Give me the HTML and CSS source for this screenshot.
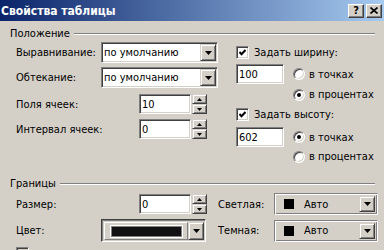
FILE: index.html
```html
<!DOCTYPE html>
<html lang="ru">
<head>
<meta charset="utf-8">
<title>Свойства таблицы</title>
<link rel="stylesheet" href="styles.css">
</head>
<body>
<div class="win">
  <div class="title">
    <span class="title-text">Свойства таблицы</span>
    <div class="tbtns">
      <span class="tbtn q">?</span>
      <span class="tbtn"><svg width="8" height="7" viewBox="0 0 8 7"><path d="M0.5 0.5 L7.5 6.5 M7.5 0.5 L0.5 6.5" stroke="#000" stroke-width="1.6"/></svg></span>
    </div>
  </div>
  <div class="body">
    <div class="legend"><span>Положение</span><i class="rule"></i></div>
    <div class="pos">
      <div class="pos-left">
        <div class="row r1">
          <span class="lbl">Выравнивание:</span>
          <div class="combo"><span class="val">по умолчанию</span><span class="dd"><svg width="7" height="4" viewBox="0 0 7 4"><polygon points="0,0 7,0 3.5,4" fill="#000"/></svg></span></div>
        </div>
        <div class="row r2">
          <span class="lbl">Обтекание:</span>
          <div class="combo"><span class="val">по умолчанию</span><span class="dd"><svg width="7" height="4" viewBox="0 0 7 4"><polygon points="0,0 7,0 3.5,4" fill="#000"/></svg></span></div>
        </div>
        <div class="row r3">
          <span class="lbl wide">Поля ячеек:</span>
          <div class="field">10</div>
          <div class="spin">
            <span class="sb"><svg width="5" height="3" viewBox="0 0 5 3"><polygon points="2.5,0 5,3 0,3" fill="#000"/></svg></span>
            <span class="sb"><svg width="5" height="3" viewBox="0 0 5 3"><polygon points="0,0 5,0 2.5,3" fill="#000"/></svg></span>
          </div>
        </div>
        <div class="row r4">
          <span class="lbl wide">Интервал ячеек:</span>
          <div class="field">0</div>
          <div class="spin">
            <span class="sb"><svg width="5" height="3" viewBox="0 0 5 3"><polygon points="2.5,0 5,3 0,3" fill="#000"/></svg></span>
            <span class="sb"><svg width="5" height="3" viewBox="0 0 5 3"><polygon points="0,0 5,0 2.5,3" fill="#000"/></svg></span>
          </div>
        </div>
      </div>
      <div class="pos-right">
        <div class="cbrow c1"><span class="cb"><svg width="7" height="7" viewBox="0 0 7 7"><polyline points="0.5,3 2.5,5.2 6.5,1" fill="none" stroke="#000" stroke-width="2"/></svg></span>Задать ширину:</div>
        <div class="inrow i1"><div class="field narrow">100</div><span class="radio"></span><span>в точках</span></div>
        <div class="radrow d1"><span class="radio on"></span><span>в процентах</span></div>
        <div class="cbrow c2"><span class="cb"><svg width="7" height="7" viewBox="0 0 7 7"><polyline points="0.5,3 2.5,5.2 6.5,1" fill="none" stroke="#000" stroke-width="2"/></svg></span>Задать высоту:</div>
        <div class="inrow i2"><div class="field narrow">602</div><span class="radio on"></span><span>в точках</span></div>
        <div class="radrow d2"><span class="radio"></span><span>в процентах</span></div>
      </div>
    </div>
    <div class="legend l2"><span>Границы</span><i class="rule"></i></div>
    <div class="borders">
      <div class="row">
        <span class="lbl wide">Размер:</span>
        <div class="field">0</div>
        <div class="spin">
          <span class="sb"><svg width="5" height="3" viewBox="0 0 5 3"><polygon points="2.5,0 5,3 0,3" fill="#000"/></svg></span>
          <span class="sb"><svg width="5" height="3" viewBox="0 0 5 3"><polygon points="0,0 5,0 2.5,3" fill="#000"/></svg></span>
        </div>
      </div>
      <span class="rlbl">Светлая:</span>
      <div class="swcombo"><span class="sq"></span><span class="sval">Авто</span><span class="dd"><svg width="7" height="4" viewBox="0 0 7 4"><polygon points="0,0 7,0 3.5,4" fill="#000"/></svg></span></div>
      <div class="row">
        <span class="lbl">Цвет:</span>
        <div class="colorctl"><span class="swbtn"><span class="swatch"></span></span><span class="dd"><svg width="7" height="4" viewBox="0 0 7 4"><polygon points="0,0 7,0 3.5,4" fill="#000"/></svg></span></div>
      </div>
      <span class="rlbl">Темная:</span>
      <div class="swcombo"><span class="sq"></span><span class="sval">Авто</span><span class="dd"><svg width="7" height="4" viewBox="0 0 7 4"><polygon points="0,0 7,0 3.5,4" fill="#000"/></svg></span></div>
    </div>
    <div class="lastrow"><span class="cb"></span></div>
  </div>
</div>
</body>
</html>
```
FILE: styles.css
```css
html, body {
  margin: 0;
  padding: 0;
}
body {
  width: 384px;
  height: 250px;
  overflow: hidden;
  background: #d4d0c8;
  font: 11px/13px "DejaVu Sans Condensed", "DejaVu Sans", sans-serif;
  color: #000;
}
.win {
  width: 384px;
}
.title {
  height: 21px;
  background: linear-gradient(to right, #0a246a, #a6caf0);
  display: flex;
  align-items: center;
  justify-content: space-between;
  padding: 0 2px 0 1px;
}
.title-text {
  color: #fff;
  font-weight: bold;
  font-size: 12px;
  line-height: 14px;
}
.tbtns {
  display: flex;
  gap: 2px;
}
.tbtn {
  width: 16px;
  height: 14px;
  box-sizing: border-box;
  background: #d4d0c8;
  border: 1px solid;
  border-color: #fff #404040 #404040 #fff;
  box-shadow: inset -1px -1px #808080;
  display: flex;
  align-items: center;
  justify-content: center;
}
.tbtn.q {
  font-weight: bold;
  font-size: 11px;
  line-height: 11px;
}
.body {
  padding: 0 9px 0 10px;
}
.legend {
  display: flex;
  align-items: center;
  gap: 4px;
  height: 13px;
  margin-top: 6px;
}
.legend.l2 {
  margin-top: 14px;
}
.rule {
  flex: 1;
  height: 0;
  border-top: 1px solid #808080;
  border-bottom: 1px solid #fff;
}
.pos {
  display: flex;
}
.pos-left {
  width: 226px;
  display: flex;
  flex-direction: column;
}
.row {
  display: flex;
  align-items: center;
}
.lbl {
  width: 85px;
  padding-left: 6px;
  flex: none;
}
.lbl.wide {
  width: 123px;
}
.r1 { margin-top: 2px; height: 21px; }
.r2 { margin-top: 4px; height: 21px; }
.r3 { margin-top: 6px; height: 20px; }
.r4 { margin-top: 5px; height: 20px; }

.combo {
  width: 117px;
  height: 21px;
  box-sizing: border-box;
  background: #fff;
  border: 1px solid;
  border-color: #808080 #fff #fff #808080;
  box-shadow: inset 1px 1px #404040, inset -1px -1px #d4d0c8;
  padding: 1px;
  display: flex;
  align-items: stretch;
}
.val {
  flex: 1;
  padding-left: 1px;
  display: flex;
  align-items: center;
}
.dd {
  width: 16px;
  box-sizing: border-box;
  background: #d4d0c8;
  border: 1px solid;
  border-color: #d4d0c8 #404040 #404040 #d4d0c8;
  box-shadow: inset 1px 1px #fff, inset -1px -1px #808080;
  display: flex;
  align-items: center;
  justify-content: center;
  flex: none;
}
.dd svg {
  display: block;
}
.field {
  width: 52px;
  height: 20px;
  box-sizing: border-box;
  background: #fff;
  border: 1px solid;
  border-color: #808080 #fff #fff #808080;
  box-shadow: inset 1px 1px #404040, inset -1px -1px #d4d0c8;
  padding-left: 2px;
  display: flex;
  align-items: center;
  flex: none;
}
.field.narrow {
  width: 48px;
}
.spin {
  margin-left: 1px;
  width: 15px;
  height: 20px;
  display: flex;
  flex-direction: column;
  flex: none;
}
.sb {
  flex: 1;
  box-sizing: border-box;
  background: #d4d0c8;
  border: 1px solid;
  border-color: #d4d0c8 #404040 #404040 #d4d0c8;
  box-shadow: inset 1px 1px #fff, inset -1px -1px #808080;
  display: flex;
  align-items: center;
  justify-content: center;
}
.sb svg {
  display: block;
}
.pos-right {
  display: flex;
  flex-direction: column;
}
.cbrow {
  display: flex;
  align-items: center;
  height: 13px;
  gap: 5px;
}
.c1 { margin-top: 6px; }
.c2 { margin-top: 7px; }
.cb {
  width: 13px;
  height: 13px;
  box-sizing: border-box;
  background: #fff;
  border: 1px solid;
  border-color: #808080 #fff #fff #808080;
  box-shadow: inset 1px 1px #404040, inset -1px -1px #d4d0c8;
  display: flex;
  align-items: center;
  justify-content: center;
  flex: none;
}
.cb svg {
  display: block;
}
.inrow {
  display: flex;
  align-items: center;
  height: 20px;
}
.i1 { margin-top: 5px; }
.i2 { margin-top: 6px; }
.radio {
  width: 12px;
  height: 12px;
  box-sizing: border-box;
  border-radius: 50%;
  background: #fff;
  border: 1px solid;
  border-color: #808080 #fff #fff #808080;
  box-shadow: inset 1px 1px #404040, inset -1px -1px #d4d0c8;
  margin: 0 4px 0 9px;
  position: relative;
  flex: none;
}
.radio.on::after {
  content: "";
  position: absolute;
  left: 3px;
  top: 3px;
  width: 4px;
  height: 4px;
  border-radius: 50%;
  background: #000;
}
.radrow {
  display: flex;
  align-items: center;
  height: 13px;
  padding-left: 48px;
}
.d1 { margin-top: 4px; }
.d2 { margin-top: 3px; }

.borders {
  display: grid;
  grid-template-columns: 208px 56px 104px;
  grid-template-rows: 22px 23px;
  row-gap: 4px;
  margin-top: 3px;
  align-items: center;
}
.rlbl {
  align-self: center;
}
.swcombo {
  height: 22px;
  box-sizing: border-box;
  border: 1px solid;
  border-color: #808080 #fff #fff #808080;
  box-shadow: inset 1px 1px #fff, inset -1px -1px #808080;
  padding: 2px 2px 2px 9px;
  display: flex;
  align-items: stretch;
}
.sq {
  width: 10px;
  height: 10px;
  background: #000;
  border: 0;
  align-self: center;
  flex: none;
}
.sval {
  flex: 1;
  padding-left: 10px;
  display: flex;
  align-items: center;
}
.colorctl {
  width: 105px;
  height: 23px;
  box-sizing: border-box;
  border: 1px solid;
  border-color: #404040 #fff #fff #404040;
  box-shadow: inset 1px 1px #808080;
  padding: 2px 1px 1px 2px;
  display: flex;
  align-items: stretch;
}
.swbtn {
  flex: 1;
  box-sizing: border-box;
  border: 1px solid;
  border-color: #fff #808080 #808080 #fff;
  display: flex;
  align-items: center;
  justify-content: center;
}
.swatch {
  width: 71px;
  height: 11px;
  box-sizing: border-box;
  background: #111;
  border: 1px solid #808080;
  box-shadow: 0 0 0 1px #fff;
}
.colorctl .dd {
  width: 16px;
}
.lastrow {
  margin-top: 5px;
  padding-left: 6px;
  display: flex;
}
.lastrow .cb {
  background: #d4d0c8;
}
```
